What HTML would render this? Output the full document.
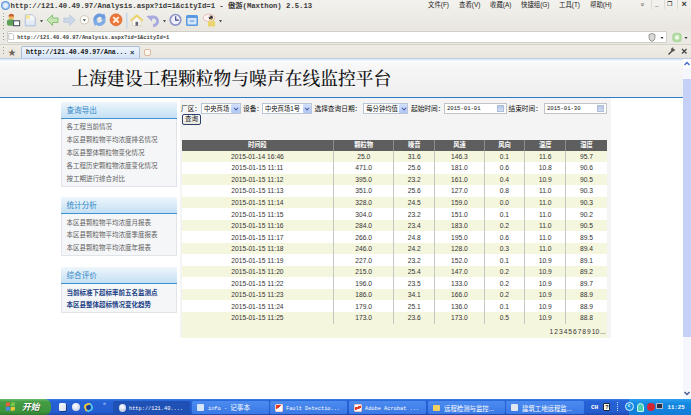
<!DOCTYPE html>
<html><head><meta charset="utf-8">
<style>
*{box-sizing:border-box;margin:0;padding:0}
html,body{width:691px;height:415px;overflow:hidden;background:#fff}
body{position:relative;font-family:"Liberation Sans","Noto Sans CJK SC",sans-serif;color:#333}
.a{position:absolute;white-space:nowrap}
.chrome{left:0;top:0;width:691px;height:59px;background:linear-gradient(#f3f2ee 0,#e8e6df 30px,#ebe9e3 31px,#ebe9e3 100%)}
.mono{font-family:"Liberation Mono","Noto Sans CJK SC",monospace}
.title{left:10.6px;top:0.5px;font-size:7.3px;font-weight:bold;line-height:10px;color:#3a3a3a;letter-spacing:-0.03px}
.menu{top:0.2px;font-size:6.4px;line-height:9px;color:#222}
.addr{left:7px;top:31.4px;width:659.5px;height:11.6px;background:#fff;border:1px solid #d0cec6;border-radius:1px}
.addrt{left:17.2px;top:33.5px;font-size:5.4px;line-height:9px;color:#3a3a3a;font-weight:bold}
.tabbar{left:0;top:43.5px;width:691px;height:15px;background:linear-gradient(#efece5,#e9e5dc);border-top:1px solid #d6d3ca}
.tab{left:20.5px;top:45.8px;width:119.5px;height:13px;background:linear-gradient(#f1f6fd,#d3e3f6);border:1px solid #a9bdd6;border-bottom:none;border-radius:2px 2px 0 0}
.tabt{left:26px;top:47.6px;font-size:6.5px;font-weight:bold;line-height:10px;color:#111}
.page{left:0;top:59px;width:683px;height:340px;background:#fff}
.hdr{left:0;top:58.2px;width:691px;height:38.8px;background:linear-gradient(#a9c0dc 0,#dfe9f5 1.5px,#fbfbfc 3px,#f6f6f7 10px,#efeff0 100%)}
.hline{left:0;top:96.5px;width:683px;height:1.6px;background:#2b7cc4}
.h1{left:71.3px;top:68px;font-family:"Liberation Serif","Noto Serif CJK SC",serif;font-size:17.8px;line-height:22px;color:#111;font-weight:500}
.panel{left:61px;width:116px;background:#f4f6f8;border:1px solid #e1e5e9}
.ph{left:61px;width:116px;height:17.4px;background:linear-gradient(#eef6fb,#c4e0f4);border-bottom:1.5px solid #3f92d0}
.pht{left:66.5px;font-size:7.6px;line-height:10px;color:#2f86c8;font-weight:400;margin-top:.6px}
.it{left:66.5px;font-size:6.5px;line-height:9px;color:#606060;margin-top:.5px}
.itb{left:66.5px;font-size:6.5px;line-height:9px;color:#1b3f86;font-weight:bold}
.box{left:179.8px;top:98px;width:431px;height:240px;background:#f4f4f4}
.lbl{font-size:6.7px;line-height:9px;color:#111;top:103.5px}
.sel{top:103px;height:10.5px;background:#fff;border:1px solid #b9c6d8;font-size:6.3px;line-height:9.5px;padding-left:2px;color:#111}
.sel i{position:absolute;right:0;top:0;width:8.5px;height:8.5px;background:linear-gradient(#d3e0fc,#b0c6f6);border-radius:1px}
.sel i:after{content:"";position:absolute;left:2.6px;top:1.8px;width:3.2px;height:3.2px;border-right:1.3px solid #3a5590;border-bottom:1.3px solid #3a5590;transform:rotate(45deg) scale(.85)}
.inp{top:102.5px;height:11.5px;background:#fff;border:1px solid #c2c4c8;font-size:5.6px;line-height:9.5px;padding-left:2px;color:#111}
.inp i{position:absolute;right:2px;top:1.5px;width:7px;height:6.5px;background:linear-gradient(#b5c6e6,#d3def2);border:.5px solid #aebfdc}
.btn{left:181.8px;top:114.4px;width:19.5px;height:10.2px;border:1.3px solid #2f3d6b;border-radius:2px;background:linear-gradient(#fff,#e9e8df);font-size:6.5px;line-height:7.5px;text-align:center;color:#111}
table{position:absolute;left:181.7px;top:139.9px;width:425px;border-collapse:collapse;table-layout:fixed;font-size:6.7px;color:#333}
th{height:10.7px;background:#5e5e5e;color:#fff;font-weight:bold;font-size:6.3px;border-right:1px solid #8a8a8a;padding:0;line-height:10px;font-family:"Liberation Sans","Noto Sans CJK SC",sans-serif}
th:last-child{border-right:none}
td{height:11.54px;text-align:center;padding:0;line-height:11px;border-right:1px solid #c6c6c2}
td:last-child{border-right:none}
tr.o td{background:#f5f6de}
tr.e td{background:#fff}
.pg{left:181.7px;top:323.5px;width:425px;height:14.7px;background:#f5f6de;text-align:right;padding-right:1px;font-size:6.7px;line-height:15px;color:#333;word-spacing:-0.9px}
.sb{left:683px;top:59px;width:8px;height:340px;background:#f6f7fc}
.thumb{left:683px;top:79px;width:8px;height:258px;background:#c5d1f8}
.task{left:0;top:398.5px;width:691px;height:16.5px;background:linear-gradient(#3b80e8 0,#2663d6 12%,#245cd0 80%,#1c4ab0)}
.start{left:0;top:398.5px;width:51px;height:16.5px;background:linear-gradient(#6ab86a 0,#449c44 18%,#3c943c 80%,#2e782e);border-radius:0 6px 6px 0}
.startt{left:22px;top:401px;font-size:8.8px;text-shadow:.5px .5px 0 #2a5a2a;line-height:12px;color:#fff;font-weight:bold;font-style:italic}
.tb{top:400.5px;width:77px;height:13.5px;background:linear-gradient(#4c8cf0,#3a78e4);border-radius:1.5px;font-size:5.3px;line-height:16.4px;color:#fff;padding-left:16px}
.tb.act{background:#1f51b5}
.tb b{position:absolute;left:5px;top:3.3px;width:6.5px;height:7.5px;border-radius:1px;font-weight:normal}
.tray{left:629px;top:398.5px;width:62px;height:16.5px;background:linear-gradient(#2aa0f0,#1588e2 30%,#117cd8)}
</style></head><body>
<div class="a chrome"></div>
<div class="a" style="left:0.5px;top:0.5px;width:9px;height:9px;border-radius:50%;background:radial-gradient(#e6f0fc 30%,#3f85d8 72%)"></div>
<div class="a title mono">http://121.40.49.97/Analysis.aspx?id=1&amp;cityId=1 - 傲游(Maxthon) 2.5.13</div>
<div class="a menu" style="left:428px">文件(F)</div>
<div class="a menu" style="left:459px">查看(V)</div>
<div class="a menu" style="left:490px">收藏(A)</div>
<div class="a menu" style="left:521px">快捷组(G)</div>
<div class="a menu" style="left:559px">工具(T)</div>
<div class="a menu" style="left:590px">帮助(H)</div>
<div class="a menu" style="left:641px;top:0;font-size:6.5px;transform:rotate(90deg);color:#444">»</div>
<div class="a menu" style="left:655px;top:-0.8px;font-weight:bold">_</div>
<div class="a menu" style="left:666.5px;top:0px;font-size:5.8px">❐</div>
<div class="a menu" style="left:681.5px;top:-0.5px;font-size:9px;font-weight:bold;color:#333">×</div>

<div class="a" style="left:650.5px;top:0;width:1px;height:9px;background:#dcdad2"></div><div class="a" style="left:663.5px;top:0;width:1px;height:9px;background:#dcdad2"></div><div class="a" style="left:676.5px;top:0;width:1px;height:9px;background:#dcdad2"></div>
<!-- toolbar icons -->
<svg class="a" style="left:0;top:11px" width="240" height="20" viewBox="0 0 240 20">
 <g fill="#9a9a9a"><rect x="3" y="2" width="1" height="1"/><rect x="3" y="5" width="1" height="1"/><rect x="3" y="8" width="1" height="1"/><rect x="3" y="11" width="1" height="1"/><rect x="3" y="14" width="1" height="1"/><rect x="3" y="17" width="1" height="1"/></g>
 <circle cx="11.3" cy="6" r="2.7" fill="#eeb85a"/><path d="M8.6 5.5a2.7 2.7 0 0 1 5.4 0z" fill="#c8603a"/><rect x="7" y="8.5" width="7.5" height="6.2" rx="1.8" fill="#5f9f55"/><rect x="13.6" y="9.8" width="6" height="4.9" fill="#fff" stroke="#4a5560" stroke-width="1.1"/>
 <defs><linearGradient id="pg" x1="0" y1="0" x2="0" y2="1"><stop offset="0" stop-color="#fffef4"/><stop offset="1" stop-color="#d9e4f8"/></linearGradient></defs>
 <path d="M25.3 3.8h7l3 3v8h-10z" fill="url(#pg)" stroke="#aebfdc" stroke-width="1"/><path d="M25.8 4.3h4v3.5h-4z" fill="#f5e58f"/>
 <path d="M40 9.3h3l-1.5 2z" fill="#333"/>
 <path d="M47 9l5.500-5v3h5.500v4.5h-5.500v3z" fill="#c4e4b4" stroke="#86c070" stroke-width="1"/>
 <path d="M75.3 9l-5.500-5v3h-6v4.5h6v3z" fill="#cbd7e8" stroke="#bdcbe0" stroke-width=".8"/>
 <circle cx="84.4" cy="8.8" r="4.1" fill="#fff" stroke="#cbbfb0" stroke-width=".9"/><path d="M82.7 8.2h3.4l-1.7 2.2z" fill="#554"/>
 <g transform="rotate(-20 99.5 8.800)"><path d="M93.5 8.5a6 6 0 0 1 11-3.2l1.500-1v5h-5l1.500-1.5a3.2 3.2 0 0 0-6 .7z" fill="#6a9ade"/><path d="M105.5 9.1a6 6 0 0 1-11 3.2l-1.5 1v-5h5l-1.5 1.5a3.2 3.2 0 0 0 6-.7z" fill="#7fabe6"/></g>
 <circle cx="116" cy="8.8" r="6" fill="#ec7538" stroke="#dc5e22" stroke-width=".6"/><path d="M113.3 6.1l5.4 5.4M118.7 6.1l-5.4 5.4" stroke="#fff3e0" stroke-width="1.9"/>
 <rect x="126.3" y="1.5" width="1" height="16" fill="#b4cdee"/>
 <path d="M132.5 9.5v5.2h8.6v-5.2l-4.300-3.8z" fill="#fbfaf2" stroke="#c9c4b0" stroke-width=".6"/><path d="M130.8 9.7l6-5.3 6 5.3" stroke="#ecd268" stroke-width="1.9" fill="none" stroke-linejoin="round"/><rect x="135.5" y="10.8" width="2.6" height="3.9" fill="#667"/>
 <path d="M151.5 6.3a4.3 4.3 0 1 1 1.5 8.2" stroke="#a9abdf" stroke-width="3" fill="none"/><path d="M146.3 5l6.500-.5l-1 6z" fill="#a9abdf"/>
 <path d="M163 9.3h3l-1.5 2z" fill="#333"/>
 <circle cx="175.5" cy="8.8" r="5.3" fill="#f1f1fb" stroke="#9194c8" stroke-width="1.7"/><path d="M175.7 5.3v3.8h3" stroke="#34408a" stroke-width="1.1" fill="none"/>
 <rect x="186" y="4" width="12" height="11" rx="1.5" fill="#5a9ae0"/><rect x="187.5" y="7" width="9" height="6.5" fill="#d6e6f9"/><rect x="190" y="9" width="4" height="2" fill="#8fbaec"/>
 <ellipse cx="209" cy="6.8" rx="5.8" ry="3.7" fill="#fdf4f0" stroke="#e3b5ac" stroke-width=".9"/><circle cx="210.8" cy="6.6" r="2.1" fill="#2a2024"/><circle cx="209.8" cy="5.8" r=".7" fill="#fff"/><path d="M209.8 10.5v-1a1.8 1.8 0 0 1 3.6 0v1" stroke="#d8bf5a" stroke-width=".9" fill="none"/><rect x="208" y="10.3" width="7.2" height="5.3" rx=".6" fill="#ecd46c"/>
 <path d="M219 9.3h3l-1.5 2z" fill="#333"/>
</svg>

<div class="a" style="left:3px;top:33px;width:1px;height:9px;background:repeating-linear-gradient(#9a9a9a 0 1px,transparent 1px 3px)"></div>
<div class="a addr"></div>
<svg class="a" style="left:8.3px;top:33.3px" width="6.4" height="7.2" viewBox="0 0 8 9"><path d="M1 .5h4l2 2v6h-6z" fill="#fff" stroke="#999" stroke-width=".7"/></svg>
<div class="a addrt mono">http://121.40.49.97/Analysis.aspx?id=1&amp;cityId=1</div>
<svg class="a" style="left:646px;top:32px" width="45" height="11" viewBox="0 0 45 11"><path d="M3 2.5q3-2 6 0v3q0 3-3 4q-3-1-3-4z" fill="#d8d8d4" stroke="#888" stroke-width=".8"/><path d="M14.5 5h3l-1.5 2z" fill="#333"/><rect x="26.8" y="1.3" width="8.4" height="8.4" rx="2.5" fill="#b4dca2" stroke="#a2d292" stroke-width=".8"/><rect x="29" y="3.5" width="4" height="4" rx="1" fill="#eef8e8"/><path d="M38.5 5h3l-1.5 2z" fill="#333"/></svg>

<div class="a tabbar"></div>
<div class="a" style="left:3px;top:47px;width:1px;height:9px;background:repeating-linear-gradient(#9a9a9a 0 1px,transparent 1px 3px)"></div>
<div class="a" style="left:8px;top:46.5px;font-size:8px;line-height:11px;color:#6a6152">★</div>
<div class="a tab"></div>
<div class="a tabt mono">http://121.40.49.97/Ana...</div>
<div class="a" style="left:130px;top:47px;font-size:7.5px;line-height:11px;color:#234;font-weight:bold">×</div>
<div class="a" style="left:144px;top:48.5px;width:7px;height:7px;border:1px solid #d9b9a0;border-radius:2px;background:#fbf6ee"></div>
<svg class="a" style="left:664px;top:46px" width="27" height="11" viewBox="0 0 27 11"><path d="M4.500 8.5l4-4" stroke="#4a4a48" stroke-width="1.5" fill="none"/><path d="M7.500 3l1.200-1.3l.3 1.8l1.800.3l-1.300 1.2l-1.700-.2z" fill="#4a4a48" stroke="#4a4a48" stroke-width=".8"/><path d="M18 3l4.5 4.5M22.5 3l-4.5 4.5" stroke="#444" stroke-width="1.200"/></svg>

<!-- page -->
<div class="a page"></div>
<div class="a hdr"></div>
<div class="a hline"></div>
<div class="a h1">上海建设工程颗粒物与噪声在线监控平台</div>

<div class="a panel" style="top:101.5px;height:85px"></div>
<div class="a ph" style="top:101.5px"></div><div class="a pht" style="top:105px">查询导出</div>
<div class="a it" style="top:121.5px">各工程当前情况</div>
<div class="a it" style="top:134.5px">本区县颗粒物平均浓度排名情况</div>
<div class="a it" style="top:147.5px">本区县整体颗粒物变化情况</div>
<div class="a it" style="top:160.5px">各工程历史颗粒物浓度变化情况</div>
<div class="a it" style="top:173.5px">按工期进行综合对比</div>

<div class="a panel" style="top:197.3px;height:59px"></div>
<div class="a ph" style="top:197.3px;height:17px"></div><div class="a pht" style="top:200.6px">统计分析</div>
<div class="a it" style="top:217px">本区县颗粒物平均浓度月报表</div>
<div class="a it" style="top:229.8px">本区县颗粒物平均浓度季度报表</div>
<div class="a it" style="top:242.5px">本区县颗粒物平均浓度年报表</div>

<div class="a panel" style="top:267px;height:46px"></div>
<div class="a ph" style="top:267px;height:17px"></div><div class="a pht" style="top:270.2px">综合评价</div>
<div class="a itb" style="top:287.5px">当前标准下超标率前五名监测点</div>
<div class="a itb" style="top:299.5px">本区县整体超标情况变化趋势</div>

<div class="a box"></div>
<div class="a lbl" style="left:181px">厂区：</div>
<div class="a sel" style="left:201px;width:39.5px">中央商场<i></i></div>
<div class="a lbl" style="left:243px">设备：</div>
<div class="a sel" style="left:262px;width:50px">中央商场1号<i></i></div>
<div class="a lbl" style="left:314.5px">选择查询日期：</div>
<div class="a sel" style="left:363.3px;width:45.2px">每分钟均值<i></i></div>
<div class="a lbl" style="left:411px">起始时间：</div>
<div class="a inp mono" style="left:444px;width:62.5px">2015-01-01<i></i></div>
<div class="a lbl" style="left:508.5px">结束时间：</div>
<div class="a inp mono" style="left:544px;width:62.5px">2015-01-30<i></i></div>
<div class="a btn">查询</div>

<table>
<colgroup><col style="width:152px"><col style="width:60px"><col style="width:41px"><col style="width:49.5px"><col style="width:40.5px"><col style="width:41px"><col style="width:41px"></colgroup>
<tr><th>时间段</th><th>颗粒物</th><th>噪音</th><th>风速</th><th>风向</th><th>温度</th><th>湿度</th></tr>
<tr class="o"><td>2015-01-14 16:46</td><td>25.0</td><td>31.6</td><td>146.3</td><td>0.1</td><td>11.6</td><td>95.7</td></tr>
<tr class="e"><td>2015-01-15 11:11</td><td>471.0</td><td>25.6</td><td>181.0</td><td>0.6</td><td>10.8</td><td>90.6</td></tr>
<tr class="o"><td>2015-01-15 11:12</td><td>395.0</td><td>23.2</td><td>161.0</td><td>0.4</td><td>10.9</td><td>90.5</td></tr>
<tr class="e"><td>2015-01-15 11:13</td><td>351.0</td><td>25.6</td><td>127.0</td><td>0.8</td><td>11.0</td><td>90.3</td></tr>
<tr class="o"><td>2015-01-15 11:14</td><td>328.0</td><td>24.5</td><td>159.0</td><td>0.0</td><td>11.0</td><td>90.3</td></tr>
<tr class="e"><td>2015-01-15 11:15</td><td>304.0</td><td>23.2</td><td>151.0</td><td>0.1</td><td>11.0</td><td>90.2</td></tr>
<tr class="o"><td>2015-01-15 11:16</td><td>284.0</td><td>23.4</td><td>183.0</td><td>0.2</td><td>11.0</td><td>90.5</td></tr>
<tr class="e"><td>2015-01-15 11:17</td><td>266.0</td><td>24.8</td><td>195.0</td><td>0.6</td><td>11.0</td><td>89.5</td></tr>
<tr class="o"><td>2015-01-15 11:18</td><td>246.0</td><td>24.2</td><td>128.0</td><td>0.3</td><td>11.0</td><td>89.4</td></tr>
<tr class="e"><td>2015-01-15 11:19</td><td>227.0</td><td>23.2</td><td>152.0</td><td>0.1</td><td>10.9</td><td>89.1</td></tr>
<tr class="o"><td>2015-01-15 11:20</td><td>215.0</td><td>25.4</td><td>147.0</td><td>0.2</td><td>10.9</td><td>89.2</td></tr>
<tr class="e"><td>2015-01-15 11:22</td><td>196.0</td><td>23.5</td><td>133.0</td><td>0.2</td><td>10.9</td><td>89.7</td></tr>
<tr class="o"><td>2015-01-15 11:23</td><td>186.0</td><td>34.1</td><td>166.0</td><td>0.2</td><td>10.9</td><td>88.9</td></tr>
<tr class="e"><td>2015-01-15 11:24</td><td>179.0</td><td>25.1</td><td>136.0</td><td>0.1</td><td>10.9</td><td>88.9</td></tr>
<tr class="o"><td>2015-01-15 11:25</td><td>173.0</td><td>23.6</td><td>173.0</td><td>0.5</td><td>10.9</td><td>88.8</td></tr>
</table>
<div class="a pg">1 2 3 4 5 6 7 8 9 10 ...</div>

<div class="a sb"></div>
<div class="a thumb"></div>
<svg class="a" style="left:683px;top:59px" width="8" height="9" viewBox="0 0 8 9"><rect width="8" height="9" fill="#fff"/><path d="M1.5 6l2.5-2.5 2.5 2.5" stroke="#4a6fc8" stroke-width="1.5" fill="none"/></svg>
<svg class="a" style="left:683px;top:389px" width="8" height="9" viewBox="0 0 8 9"><path d="M1.5 3l2.5 2.5 2.5-2.5" stroke="#4a5f98" stroke-width="1.5" fill="none"/></svg>

<!-- taskbar -->
<div class="a task"></div>
<div class="a start"></div>
<svg class="a" style="left:5.3px;top:402px" width="11.5" height="9.9" viewBox="0 0 14 12"><rect x="1" y="1" width="5" height="4.5" fill="#e8603a" transform="skewY(-8)"/><rect x="7" y="1.8" width="5" height="4.5" fill="#7ac84a" transform="skewY(-8)"/><rect x="1" y="6.5" width="5" height="4.5" fill="#4a8ae8" transform="skewY(-8)"/><rect x="7" y="7.3" width="5" height="4.5" fill="#f0c83a" transform="skewY(-8)"/></svg>
<div class="a startt">开始</div>
<div class="a" style="left:59.3px;top:402.6px;width:7px;height:8px;background:linear-gradient(135deg,#fff,#cfdcf2);border-radius:1.5px;box-shadow:.7px .7px 0 #1a2a60"></div>
<div class="a" style="left:71.8px;top:403px;width:8px;height:8px;background:radial-gradient(circle at 40% 35%,#fff,#b9c6e2);border-radius:50%"></div>
<div class="a" style="left:84px;top:402.8px;width:8.5px;height:8.5px;border-radius:50%;border:2.2px solid #4cc4f0;border-left-color:#e8c848;border-top-color:#e8c848;background:#1c3c98;transform:rotate(-20deg)"></div>
<div class="a" style="left:103px;top:400px;font-size:5px;line-height:6px;color:#cfe0ff">»</div>
<div class="a tb act mono" style="left:113px">http://121.40....<b style="left:5.8px;width:7.4px;height:7.8px;border-radius:50%;background:radial-gradient(circle at 45% 35%,#fff,#c3cfe6 70%,#d8c890)"></b></div>
<div class="a tb mono" style="left:192px">info - <span style="font-size:6.6px">记事本</span><b style="background:#d6e6fb"></b></div>
<div class="a tb mono" style="left:270px">Fault Detectio...<b style="width:7.5px;height:8.3px;background:linear-gradient(140deg,#e23c2c 42%,#fff 44%);border:.6px solid #f4d0c8"></b></div>
<div class="a tb mono" style="left:349px">Adobe Acrobat ...<b style="width:7.5px;height:8.3px;background:linear-gradient(160deg,#fff 30%,#e23c2c 32%,#e23c2c 62%,#fff 64%);border:.6px solid #f0c8c0"></b></div>
<div class="a tb" style="left:428px;font-size:6.4px">远程检测与监控...<b style="background:#f0d060;height:6px;top:4px"></b></div>
<div class="a tb" style="left:506px;font-size:6.4px;width:78px">建筑工地远程监...<b style="background:#e0e6f0"></b></div>
<div class="a tray"></div>
<div class="a mono" style="left:591px;top:403px;font-size:6.2px;line-height:9px;color:#fff;font-weight:bold;letter-spacing:-.3px">CH</div>
<div class="a" style="left:603.3px;top:402.5px;width:7px;height:8.5px;background:#fffef2;border:.6px solid #223;border-radius:1px;font-size:6px;line-height:7.3px;text-align:center;color:#111;font-weight:bold">?</div>
<div class="a" style="left:617px;top:402px;width:3px;height:9px;border-left:1.5px dotted #bfe4ff"></div>
<div class="a" style="left:624.5px;top:402px;width:9px;height:9px;border-radius:50%;background:#1a90e0;border:1.3px solid #e0f2ff;font-size:7px;line-height:6px;color:#fff;font-weight:bold;text-align:center">‹</div>
<div class="a" style="left:637px;top:402.5px;width:7px;height:9px;border-radius:3.5px 3.5px 1px 1px;background:#4fd0b4;border:1px solid #c8fff0"></div>
<div class="a" style="left:646.5px;top:403px;width:8px;height:8px;border-radius:50%;background:#d42434"></div>
<div class="a" style="left:656px;top:403px;width:6.5px;height:6px;background:#2c3244;border:1px solid #b0b8cc"></div>
<div class="a mono" style="left:667.5px;top:403px;font-size:5.7px;line-height:9px;color:#fff;font-weight:bold">11:25</div>
</body></html>
